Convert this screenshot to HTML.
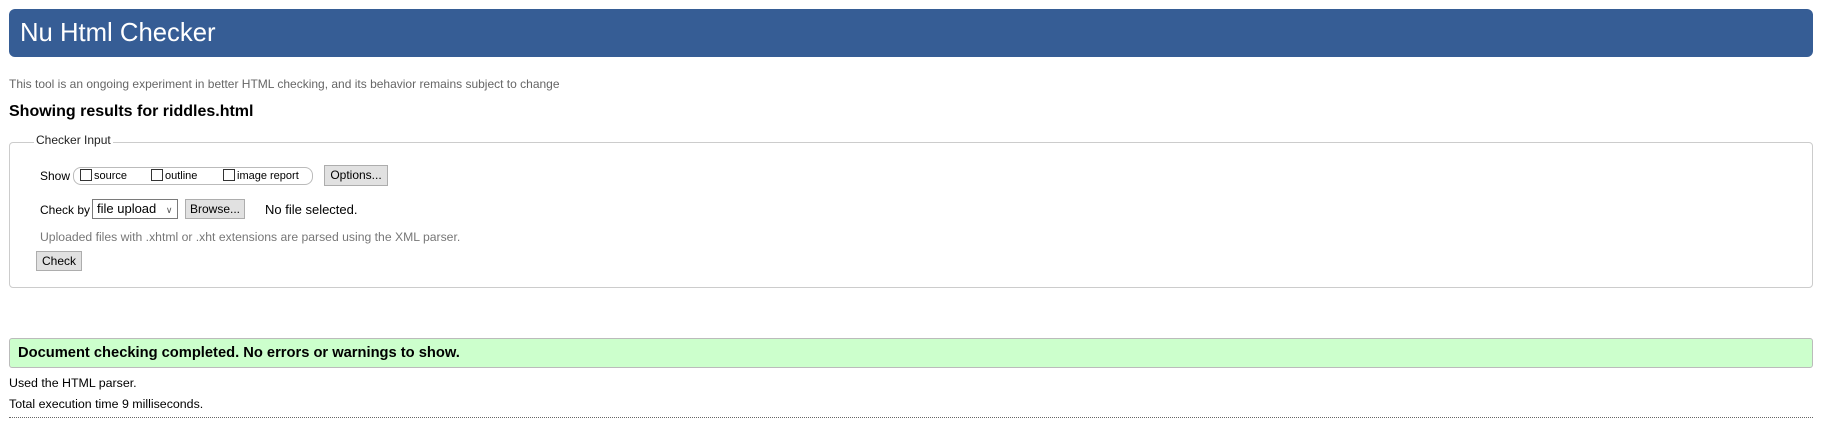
<!DOCTYPE html>
<html><head><meta charset="utf-8"><style>
*{box-sizing:border-box}
body{margin:0;width:1825px;height:423px;background:#fff;font-family:"Liberation Sans",sans-serif;color:#000;position:relative;overflow:hidden}
.a{position:absolute;white-space:nowrap}
.hdr{left:9px;top:9px;width:1804px;height:48px;background:#365d95;border-radius:6px;color:#fff;font-size:25.7px;line-height:48px;padding-left:11px}
.fs{left:9px;top:142px;width:1804px;height:146px;border:1px solid #ccc;border-radius:4px}
.btn{background:#e1e1e1;border:1px solid #adadad;font-size:12px;text-align:center;line-height:19px}
.cb{display:inline-block;width:12px;height:12px;border:1px solid #333;vertical-align:-2px;margin-right:2px}
.sm{font-size:12px}
</style></head><body>
<div class="a hdr">Nu Html Checker</div>
<div class="a" style="left:9px;top:77px;font-size:12px;color:#666">This tool is an ongoing experiment in better HTML checking, and its behavior remains subject to change</div>
<div class="a" style="left:9px;top:103px;font-size:16px;font-weight:bold">Showing results for riddles.html</div>
<div class="a fs"></div>
<div class="a sm" style="left:34px;top:133px;background:#fff;padding:0 2px;color:#222">Checker Input</div>
<div class="a sm" style="left:40px;top:169px">Show</div>
<div class="a" style="left:73px;top:167px;width:240px;height:18px;border:1px solid #bbb;border-radius:8px"></div>
<div class="a" style="left:80px;top:169px;font-size:11px"><span class="cb"></span>source</div>
<div class="a" style="left:151px;top:169px;font-size:11px"><span class="cb"></span>outline</div>
<div class="a" style="left:223px;top:169px;font-size:11px"><span class="cb"></span>image report</div>
<div class="a btn" style="left:324px;top:165px;width:64px;height:21px">Options...</div>
<div class="a sm" style="left:40px;top:203px">Check by</div>
<div class="a" style="left:92px;top:199px;width:86px;height:20px;border:1px solid #7a7a7a;font-size:13px;line-height:18px;padding-left:4px">file upload <span style="font-size:9px;margin-left:6px;color:#555">&#8744;</span></div>
<div class="a btn" style="left:185px;top:199px;width:60px;height:20px">Browse...</div>
<div class="a" style="left:265px;top:202px;font-size:13px">No file selected.</div>
<div class="a sm" style="left:40px;top:230px;color:#777;font-size:12.2px">Uploaded files with .xhtml or .xht extensions are parsed using the XML parser.</div>
<div class="a btn" style="left:36px;top:251px;width:46px;height:20px">Check</div>
<div class="a" style="left:9px;top:338px;width:1804px;height:30px;background:#ccffcc;border:1px solid #bbb;border-radius:3px;font-size:14.7px;font-weight:bold;line-height:28px;padding-left:8px">Document checking completed. No errors or warnings to show.</div>
<div class="a" style="left:9px;top:376px;font-size:12.4px">Used the HTML parser.</div>
<div class="a" style="left:9px;top:397px;font-size:12.4px">Total execution time 9 milliseconds.</div>
<div class="a" style="left:9px;top:417px;width:1804px;border-top:1px dotted #666"></div>
</body></html>
